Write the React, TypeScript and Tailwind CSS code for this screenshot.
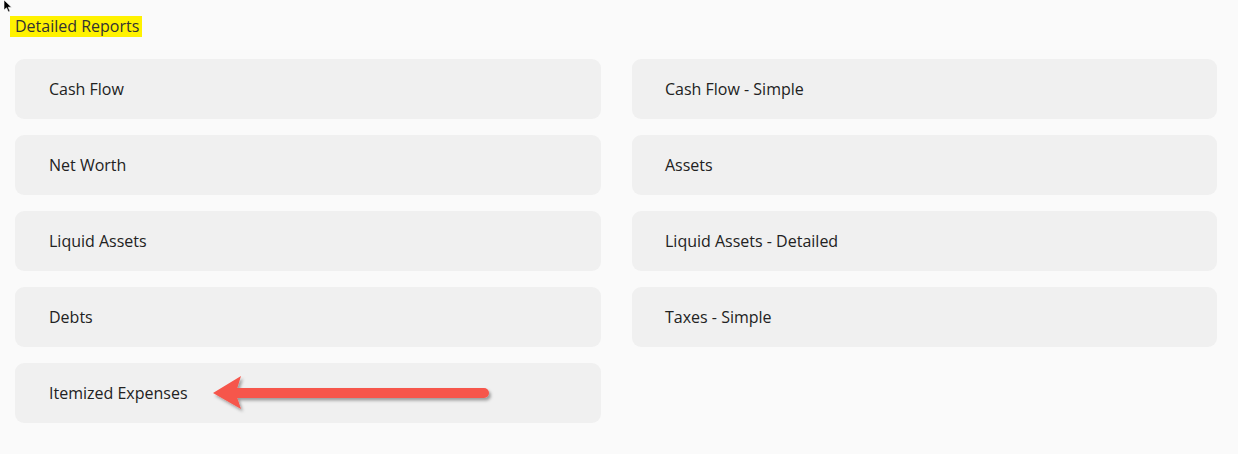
import React from 'react';

const left = ['Cash Flow', 'Net Worth', 'Liquid Assets', 'Debts', 'Itemized Expenses'];
const right = ['Cash Flow - Simple', 'Assets', 'Liquid Assets - Detailed', 'Taxes - Simple'];

const Card = ({ label, pad }: { label: string; pad: string }) => (
  <div className={`h-[60px] rounded-[9px] bg-[#f0f0f0] ${pad} flex items-center text-[16px] text-[#222]`}>
    {label}
  </div>
);

const App = () => {
  return (
    <div className="relative w-[1238px] h-[454px] bg-[#fafafa] overflow-hidden" style={{ fontFamily: '"Open Sans", sans-serif' }}>
      {/* mouse pointer */}
      <svg className="absolute left-[3px] top-0" width="10" height="14" viewBox="0 0 10 14">
        <path d="M1 0 L1 10 L3.5 7.8 L5.5 12 L7 11.3 L5.2 7.2 L8.5 7.2 Z" fill="#000" stroke="#fff" strokeWidth="0.6" />
      </svg>

      <div className="flex pt-[16px] pl-[10px]">
        <span className="bg-[#fff200] pl-[5px] pr-[3px] h-[21px] leading-[21px] text-[16px] text-[#333]">
          Detailed Reports
        </span>
      </div>

      <div className="grid grid-cols-[586px_585px] gap-x-[31px] gap-y-[16px] pl-[15px] pt-[22px]">
        {left.map((l, i) => (
          <React.Fragment key={l}>
            <Card label={l} pad="pl-[34px]" />
            {right[i] ? <Card label={right[i]} pad="pl-[33px]" /> : <div />}
          </React.Fragment>
        ))}
      </div>

      {/* annotation arrow */}
      <svg className="absolute left-[205px] top-[369px]" width="295" height="50" viewBox="0 0 295 50">
        <defs>
          <filter id="sh" x="-10%" y="-30%" width="120%" height="170%">
            <feDropShadow dx="2" dy="2.5" stdDeviation="1.8" floodColor="#000" floodOpacity="0.35" />
          </filter>
        </defs>
        <g filter="url(#sh)">
          <line x1="30" y1="24" x2="279" y2="24" stroke="#f6564b" strokeWidth="10" strokeLinecap="round" />
          <path d="M8 24 L36 7 L32 20 L32 28 L36 40 Z" fill="#f6564b" />
        </g>
      </svg>
    </div>
  );
};

export default App;
